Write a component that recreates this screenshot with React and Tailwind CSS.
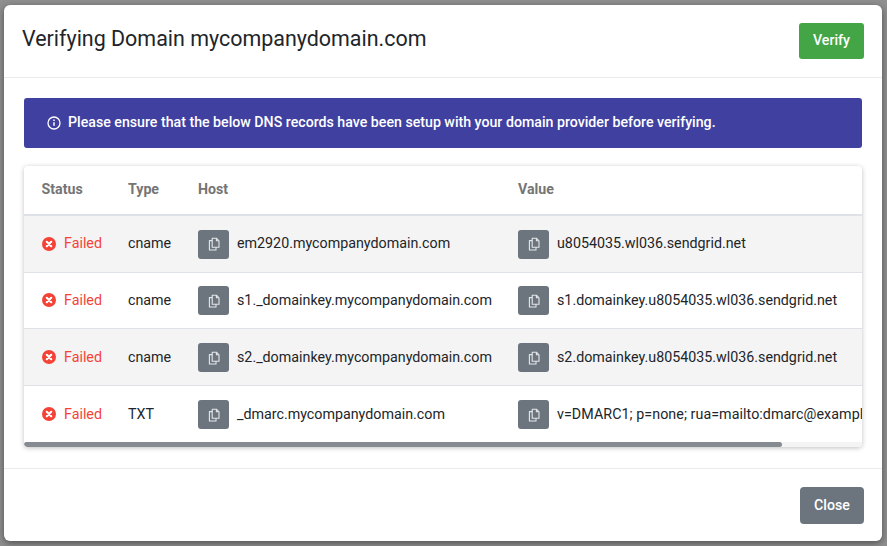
import React from "react";

function CopyIcon() {
  return (
    <svg width="14" height="14" viewBox="0 0 14 14" fill="none" stroke="#e4e7ea" strokeWidth="1.1" strokeLinejoin="round">
      <path d="M5.2 1.2h4.2L12 3.8V10.2H5.2z" fill="#6c757d" />
      <path d="M9.4 1.2v2.6H12" />
      <path d="M5.2 3.6H2.4V13H9v-2.8" />
    </svg>
  );
}

function FailIcon() {
  return (
    <svg width="14" height="14" viewBox="0 0 14 14" className="shrink-0">
      <circle cx="7" cy="7" r="7" fill="#f44336" />
      <path d="M4.8 4.8l4.4 4.4M9.2 4.8L4.8 9.2" stroke="#fff" strokeWidth="2.2" strokeLinecap="round" />
    </svg>
  );
}

function CopyButton() {
  return (
    <button className="w-[31px] h-[29px] shrink-0 rounded-[3px] bg-[#6c757d] flex items-center justify-center">
      <CopyIcon />
    </button>
  );
}

const rows = [
  { type: "cname", host: "em2920.mycompanydomain.com", value: "u8054035.wl036.sendgrid.net", h: "h-[57px] border-b border-[#dee2e6]", bg: "bg-[#f4f4f4]", vc: "" },
  { type: "cname", host: "s1._domainkey.mycompanydomain.com", value: "s1.domainkey.u8054035.wl036.sendgrid.net", h: "h-[56px] border-b border-[#dee2e6]", bg: "bg-white", vc: "" },
  { type: "cname", host: "s2._domainkey.mycompanydomain.com", value: "s2.domainkey.u8054035.wl036.sendgrid.net", h: "h-[57px] border-b border-[#dee2e6] pt-[1px]", bg: "bg-[#f4f4f4]", vc: "" },
  { type: "TXT", host: "_dmarc.mycompanydomain.com", value: "v=DMARC1; p=none; rua=mailto:dmarc@example.com", h: "h-[56px] pt-[1px]", bg: "bg-white", vc: "tracking-[0.06px]" },
];

export default function App() {
  return (
    <div className="w-[887px] h-[546px] overflow-hidden bg-[#8f8f8f] pt-[5px] pl-[4px] font-['Roboto',sans-serif]">
      <div className="w-[878px] h-[536px] bg-white rounded-[6px] shadow-[0_2px_7px_rgba(0,0,0,0.45)] flex flex-col text-[#212529]">
        <div className="h-[73px] shrink-0 border-b border-[#e9ecef] pl-[18px] pr-[18px] flex items-center justify-between">
          <h1 className="text-[21.45px] leading-[30px] font-normal pb-[4px]">Verifying Domain mycompanydomain.com</h1>
          <button className="w-[65px] h-[36px] rounded-[3px] bg-[#43a546] text-white text-[14.2px] font-medium">Verify</button>
        </div>

        <div className="flex-1 pt-[20px] px-[20px]">
          <div className="h-[50px] rounded-[3px] bg-[#4040a1] text-white text-[14.18px] font-medium flex items-center gap-[7px] pl-[23px]">
            <svg width="14" height="14" viewBox="0 0 14 14" fill="none" stroke="#fff">
              <circle cx="7" cy="7" r="6" strokeWidth="1.3" />
              <path d="M7 6.2v3.6" strokeWidth="1.5" />
              <path d="M7 3.6v1.5" strokeWidth="1.5" />
            </svg>
            <span>Please ensure that the below DNS records have been setup with your domain provider before verifying.</span>
          </div>

          <div className="mt-[18px] w-[838px] rounded-[4px] bg-white shadow-[0_1px_5px_rgba(0,0,0,0.25)] overflow-hidden">
            <div className="h-[50px] border-b-2 border-[#dee2e6] flex items-center text-[14.2px] font-bold text-[#757575]">
              <div className="w-[104px] pl-[17.5px]">Status</div>
              <div className="w-[70px]">Type</div>
              <div className="w-[320px]">Host</div>
              <div>Value</div>
            </div>
            {rows.map((r) => (
              <div key={r.host} className={`${r.h} ${r.bg} flex items-center text-[14.28px] whitespace-nowrap overflow-hidden`}>
                <div className="w-[104px] pl-[18px] shrink-0 flex items-center gap-[8px] text-[#f44336]">
                  <FailIcon />
                  <span>Failed</span>
                </div>
                <div className="w-[70px] shrink-0">{r.type}</div>
                <div className="w-[320px] shrink-0 flex items-center gap-[8px]">
                  <CopyButton />
                  <span>{r.host}</span>
                </div>
                <div className="flex items-center gap-[8px]">
                  <CopyButton />
                  <span className={r.vc}>{r.value}</span>
                </div>
              </div>
            ))}
            <div className="h-[5px] bg-[#f4f4f4]">
              <div className="w-[758px] h-[5px] rounded-[3px] bg-[#868b92]" />
            </div>
          </div>
        </div>

        <div className="h-[73px] shrink-0 border-t border-[#e9ecef] flex items-start justify-end pt-[18px] pr-[18px]">
          <button className="w-[64px] h-[37px] rounded-[4px] bg-[#6c757d] text-white text-[14.2px] font-medium">Close</button>
        </div>
      </div>
    </div>
  );
}
